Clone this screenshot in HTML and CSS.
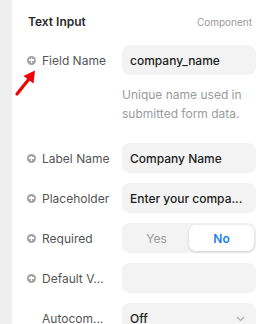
FILE: index.html
```html
<!DOCTYPE html>
<html>
<head>
<meta charset="utf-8">
<link rel="stylesheet" href="styles.css">
</head>
<body>
<div class="page">
  <div class="strip"></div>
  <div class="panel">
    <div class="header">
      <span class="title">Text Input</span>
      <span class="kind">Component</span>
    </div>

    <div class="row">
      <div class="label"><span class="plus"></span><span>Field Name</span></div>
      <div class="field">company_name</div>
    </div>
    <div class="help">Unique name used in submitted form data.</div>

    <div class="rows">
      <div class="row">
        <div class="label"><span class="plus"></span><span>Label Name</span></div>
        <div class="field">Company Name</div>
      </div>
      <div class="row">
        <div class="label"><span class="plus"></span><span>Placeholder</span></div>
        <div class="field">Enter your compa...</div>
      </div>
      <div class="row">
        <div class="label"><span class="plus"></span><span>Required</span></div>
        <div class="segment">
          <span class="opt">Yes</span>
          <span class="opt active">No</span>
        </div>
      </div>
      <div class="row">
        <div class="label"><span class="plus"></span><span>Default V...</span></div>
        <div class="field"></div>
      </div>
      <div class="row">
        <div class="label"><span class="noicon"></span><span>Autocom...</span></div>
        <div class="field select"><span>Off</span>
          <svg class="chev" width="9" height="6" viewBox="0 0 9 6"><path d="M1 1l3.5 3.5L8 1" fill="none" stroke="#aaa" stroke-width="1.2"/></svg>
        </div>
      </div>
    </div>
  </div>
  <svg class="arrow" width="267" height="324" viewBox="0 0 267 324">
    <line x1="17" y1="94" x2="29" y2="79" stroke="#f20000" stroke-width="3.2" stroke-linecap="round"/>
    <polygon points="35,70.5 33.5,83.5 23.5,76" fill="#f20000"/>
  </svg>
</div>
</body>
</html>
```
FILE: styles.css
```css
html, body {
  margin: 0;
  padding: 0;
  background: #fff;
}
.page {
  position: relative;
  display: flex;
  width: 267px;
  height: 324px;
  overflow: hidden;
  font-family: Inter, "Liberation Sans", sans-serif;
}
.strip {
  width: 12px;
  flex: none;
  background: #efefef;
}
.panel {
  flex: 1;
  padding: 14px 11px 0 15px;
}
.header {
  display: flex;
  justify-content: space-between;
  align-items: baseline;
  height: 16px;
  line-height: 16px;
  margin-bottom: 15px;
  padding: 0 4px 0 1px;
}
.title {
  font-size: 12px;
  font-weight: 600;
  color: #2a2a2a;
}
.kind {
  font-size: 10px;
  color: #9a9a9a;
}
.rows {
  display: flex;
  flex-direction: column;
  gap: 10px;
}
.row {
  display: flex;
  align-items: center;
  height: 30px;
}
.label {
  width: 95px;
  flex: none;
  display: flex;
  align-items: center;
  gap: 6px;
  font-size: 12px;
  color: #555;
  white-space: nowrap;
}
.plus {
  position: relative;
  width: 9px;
  height: 9px;
  border-radius: 50%;
  background: #a5a5a5;
  flex: none;
}
.plus::before, .plus::after {
  content: "";
  position: absolute;
  background: #fff;
}
.plus::before {
  left: 2px; top: 3.75px; width: 5px; height: 1.5px;
}
.plus::after {
  left: 3.75px; top: 2px; width: 1.5px; height: 5px;
}
.noicon {
  width: 9px;
  height: 9px;
  flex: none;
}
.field {
  box-sizing: border-box;
  width: 134px;
  height: 30px;
  border-radius: 8px;
  background: #f3f3f3;
  padding: 0 8px;
  display: flex;
  align-items: center;
  font-size: 12px;
  font-weight: 500;
  color: #222;
  white-space: nowrap;
  overflow: hidden;
}
.select {
  justify-content: space-between;
}
.chev {
  margin-right: 3px;
  margin-top: 2px;
}
.help {
  margin: 10px 0 20px 95px;
  font-size: 12px;
  line-height: 19px;
  color: #9b9b9b;
  width: 134px;
}
.segment {
  box-sizing: border-box;
  width: 134px;
  height: 30px;
  border-radius: 8px;
  background: #f3f3f3;
  padding: 2px;
  display: flex;
}
.opt {
  flex: 1;
  display: flex;
  align-items: center;
  justify-content: center;
  font-size: 12px;
  color: #999;
  border-radius: 7px;
}
.opt.active {
  background: #fff;
  color: #1f7ff0;
  font-weight: 600;
  box-shadow: 0 1px 3px rgba(0,0,0,0.15);
}
.arrow {
  position: absolute;
  left: 0;
  top: 0;
  pointer-events: none;
}
```
